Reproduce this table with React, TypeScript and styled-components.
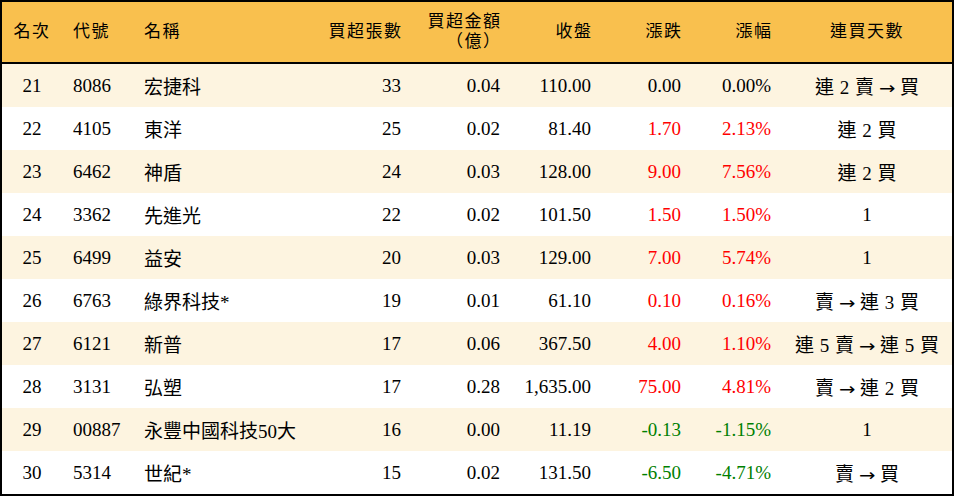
import React from 'react';
import styled, { createGlobalStyle } from 'styled-components';

const GlobalStyle = createGlobalStyle`
  html, body {
    margin: 0;
    padding: 0;
    background: #ffffff;
  }
`;

const Frame = styled.div`
  width: 954px;
  height: 496px;
  box-sizing: border-box;
  border: 2px solid #000;
  overflow: hidden;
  font-family: "Liberation Serif", "Noto Sans CJK TC", serif;
  color: #000;
`;

const Table = styled.table`
  width: 100%;
  table-layout: fixed;
  border-collapse: separate;
  border-spacing: 0;
`;

type Align = 'left' | 'right' | 'center';

const Th = styled.th<{ $align: Align }>`
  height: 62px;
  box-sizing: border-box;
  padding: 0 ${(p) => (p.$align === 'right' ? '9.5px' : '11px')} 0 ${(p) => (p.$align === 'right' ? '2px' : '11px')};
  background: #f9c04e;
  border-bottom: 2px solid #000;
  text-align: ${(p) => p.$align};
  font-size: 17px;
  font-weight: 400;
  letter-spacing: 1.5px;
  line-height: 20px;
  white-space: nowrap;
`;

const Row = styled.tr<{ $odd: boolean }>`
  height: 43px;
  background: ${(p) => (p.$odd ? '#fdf4e0' : '#ffffff')};
`;

const Td = styled.td<{ $align: Align; $tone?: 'up' | 'down' | 'flat' }>`
  padding: 0 11px;
  text-align: ${(p) => p.$align};
  font-size: 19px;
  white-space: nowrap;
  color: ${(p) => (p.$tone === 'up' ? '#ff0000' : p.$tone === 'down' ? '#008000' : '#000')};
`;

const Streak = styled.span`
  word-spacing: 1px;
`;

const Arrow = styled.span`
  font-family: "DejaVu Sans", sans-serif;
  font-size: 17px;
  display: inline-block;
  transform: scaleX(1.15);
`;

type Stock = {
  rank: number;
  code: string;
  name: string;
  lots: number;
  amount: string;
  close: string;
  change: string;
  pct: string;
  streak: string;
};

const rows: Stock[] = [
  { rank: 21, code: '8086', name: '宏捷科', lots: 33, amount: '0.04', close: '110.00', change: '0.00', pct: '0.00%', streak: '連 2 賣 → 買' },
  { rank: 22, code: '4105', name: '東洋', lots: 25, amount: '0.02', close: '81.40', change: '1.70', pct: '2.13%', streak: '連 2 買' },
  { rank: 23, code: '6462', name: '神盾', lots: 24, amount: '0.03', close: '128.00', change: '9.00', pct: '7.56%', streak: '連 2 買' },
  { rank: 24, code: '3362', name: '先進光', lots: 22, amount: '0.02', close: '101.50', change: '1.50', pct: '1.50%', streak: '1' },
  { rank: 25, code: '6499', name: '益安', lots: 20, amount: '0.03', close: '129.00', change: '7.00', pct: '5.74%', streak: '1' },
  { rank: 26, code: '6763', name: '綠界科技*', lots: 19, amount: '0.01', close: '61.10', change: '0.10', pct: '0.16%', streak: '賣 → 連 3 買' },
  { rank: 27, code: '6121', name: '新普', lots: 17, amount: '0.06', close: '367.50', change: '4.00', pct: '1.10%', streak: '連 5 賣 → 連 5 買' },
  { rank: 28, code: '3131', name: '弘塑', lots: 17, amount: '0.28', close: '1,635.00', change: '75.00', pct: '4.81%', streak: '賣 → 連 2 買' },
  { rank: 29, code: '00887', name: '永豐中國科技50大', lots: 16, amount: '0.00', close: '11.19', change: '-0.13', pct: '-1.15%', streak: '1' },
  { rank: 30, code: '5314', name: '世紀*', lots: 15, amount: '0.02', close: '131.50', change: '-6.50', pct: '-4.71%', streak: '賣 → 買' },
];

const toneOf = (change: string): 'up' | 'down' | 'flat' => {
  const v = parseFloat(change);
  if (v > 0) return 'up';
  if (v < 0) return 'down';
  return 'flat';
};

const renderStreak = (s: string) =>
  s.split('→').map((part, i) => (
    <React.Fragment key={i}>
      {i > 0 && <Arrow>→</Arrow>}
      {part}
    </React.Fragment>
  ));

const widths = [60, 71, 190, 89, 99, 91, 90, 90, 170];

export default function App() {
  return (
    <>
      <GlobalStyle />
      <Frame>
        <Table>
          <colgroup>
            {widths.map((w, i) => (
              <col key={i} style={{ width: w }} />
            ))}
          </colgroup>
          <thead>
            <tr>
              <Th $align="center">名次</Th>
              <Th $align="left">代號</Th>
              <Th $align="left">名稱</Th>
              <Th $align="right">買超張數</Th>
              <Th $align="right">
                買超金額
                <br />
                （億）
              </Th>
              <Th $align="right">收盤</Th>
              <Th $align="right">漲跌</Th>
              <Th $align="right">漲幅</Th>
              <Th $align="center">連買天數</Th>
            </tr>
          </thead>
          <tbody>
            {rows.map((r, i) => {
              const tone = toneOf(r.change);
              return (
                <Row key={r.rank} $odd={i % 2 === 0}>
                  <Td $align="center">{r.rank}</Td>
                  <Td $align="left">{r.code}</Td>
                  <Td $align="left">{r.name}</Td>
                  <Td $align="right">{r.lots}</Td>
                  <Td $align="right">{r.amount}</Td>
                  <Td $align="right">{r.close}</Td>
                  <Td $align="right" $tone={tone}>{r.change}</Td>
                  <Td $align="right" $tone={tone}>{r.pct}</Td>
                  <Td $align="center">
                    <Streak>{renderStreak(r.streak)}</Streak>
                  </Td>
                </Row>
              );
            })}
          </tbody>
        </Table>
      </Frame>
    </>
  );
}
